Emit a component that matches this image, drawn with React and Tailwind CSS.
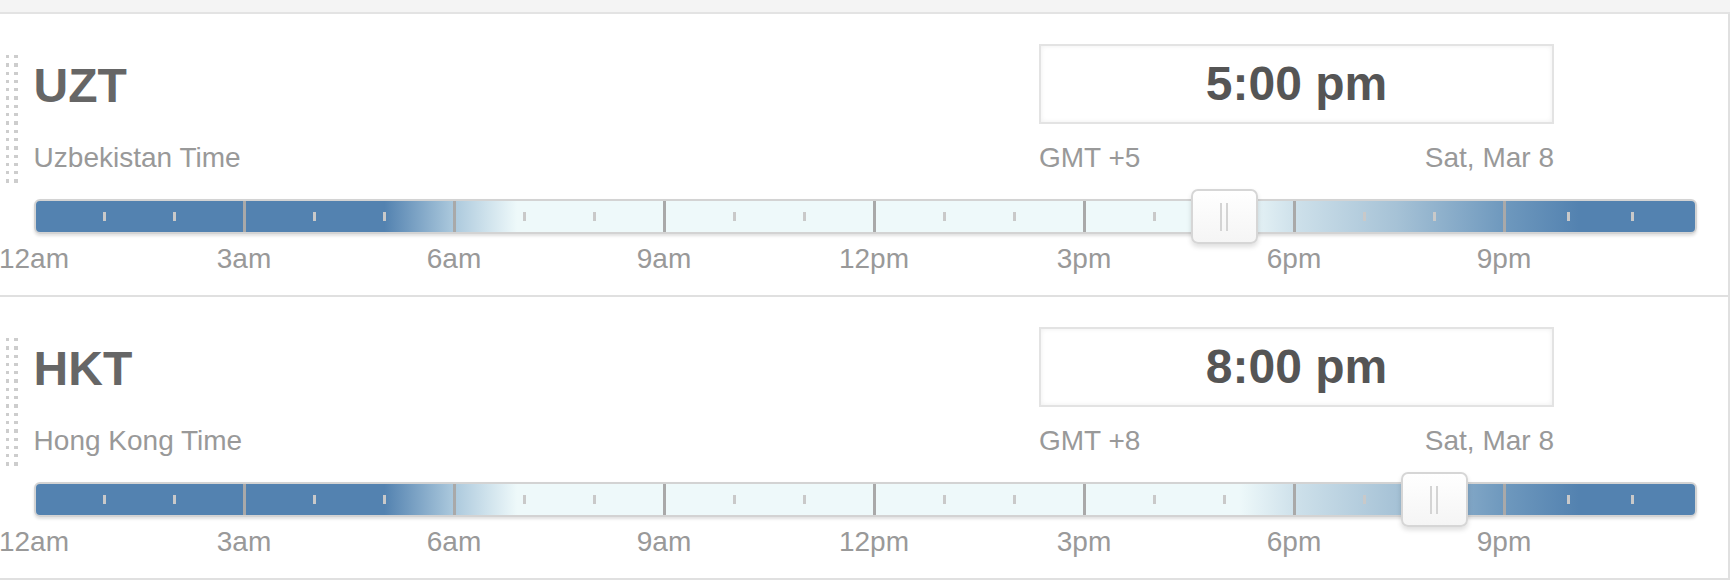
const zones = [
  {
    abbr: 'UZT',
    name: 'Uzbekistan Time',
    time: '5:00 pm',
    offset: 'GMT +5',
    date: 'Sat, Mar 8',
    hour: 17,
  },
  {
    abbr: 'HKT',
    name: 'Hong Kong Time',
    time: '8:00 pm',
    offset: 'GMT +8',
    date: 'Sat, Mar 8',
    hour: 20,
  },
];

const labels = ['12am', '3am', '6am', '9am', '12pm', '3pm', '6pm', '9pm'];

function DragHandle() {
  return (
    <div className="ml-[6px] mt-[41px] grid h-fit w-fit grid-cols-2 gap-x-[5px] gap-y-[5px]">
      {Array.from({ length: 32 }).map((_, i) => (
        <div key={i} className="h-[3.3px] w-[3.3px] bg-[#cdcdcd]" />
      ))}
    </div>
  );
}

function Ticks() {
  return (
    <>
      <div className="h-[9px] w-[3px] bg-[#c9c9c9]" />
      <div className="h-[9px] w-[3px] bg-[#c9c9c9]" />
    </>
  );
}

function DayBar({ hour }) {
  return (
    <div className="relative ml-[34px] h-[35px] w-[1663px] rounded-[6px] border-2 border-[#d3d3d3] bg-[linear-gradient(to_right,#5382b0_21%,#a8c6db_25%,#eef9fa_29%,#eef9fa_72.5%,#cde0ea_76%,#a6c2d6_82%,#6f99be_88.4%,#5382b0_93%)] shadow-[0_2px_3px_rgba(0,0,0,0.12)]">
      <div className="flex h-full overflow-hidden rounded-[4px]">
        <div className="flex h-full w-[207px] shrink-0 items-center justify-evenly">
          <Ticks />
        </div>
        {[1, 2, 3, 4, 5, 6].map((s) => (
          <div
            key={s}
            className="flex h-full w-[210px] shrink-0 items-center justify-evenly border-l-[3px] border-[#a9a9a9]"
          >
            <Ticks />
          </div>
        ))}
        <div className="flex h-full flex-1 items-center justify-evenly border-l-[3px] border-[#a9a9a9]">
          <Ticks />
        </div>
      </div>

      {/* slider thumb */}
      <div
        className="absolute top-[-12px] flex h-[55px] w-[67px] items-center justify-center gap-[4.5px] rounded-[7px] border-2 border-[#d6d6d6] bg-gradient-to-b from-white to-[#f5f5f5] shadow-[0_3px_5px_rgba(0,0,0,0.13)]"
        style={{ left: hour * 70 - 35.5 }}
      >
        <div className="h-[28px] w-[2px] bg-[#d4d4d4]" />
        <div className="h-[28px] w-[2px] bg-[#d4d4d4]" />
      </div>
    </div>
  );
}

function ZoneCard({ zone }) {
  return (
    <div className="h-[283px] border-b-2 border-[#e0e0e0]">
      <div className="flex h-[185px]">
        <DragHandle />
        <div className="ml-[16px] mt-[48px]">
          <div className="text-[48px] font-bold leading-[48px] text-[#666]">{zone.abbr}</div>
          <div className="mt-[35px] text-[28px] leading-[26px] text-[#999]">{zone.name}</div>
        </div>
        <div className="ml-auto mr-[174px] mt-[30px] w-[515px]">
          <div className="flex h-[80px] items-center justify-center border-2 border-[#e3e3e3] bg-white text-[48px] font-bold leading-none text-[#555] shadow-[inset_0_0_5px_rgba(0,0,0,0.07)]">
            {zone.time}
          </div>
          <div className="mt-[21px] flex justify-between text-[28px] leading-[26px] text-[#999]">
            <span>{zone.offset}</span>
            <span>{zone.date}</span>
          </div>
        </div>
      </div>

      <DayBar hour={zone.hour} />

      <div className="-ml-[71px] mt-[12px] flex text-[28px] leading-[26px] text-[#999]">
        {labels.map((l) => (
          <div key={l} className="w-[210px] shrink-0 text-center">
            {l}
          </div>
        ))}
      </div>
    </div>
  );
}

export default function App() {
  return (
    <div className="h-[580px] w-[1730px] overflow-hidden bg-white font-['Liberation_Sans',Arial,sans-serif]">
      <div className="h-[14px] border-b-2 border-[#e3e3e3] bg-[#f4f4f4]" />
      <div className="border-r-2 border-[#e0e0e0]">
        {zones.map((z) => (
          <ZoneCard key={z.abbr} zone={z} />
        ))}
      </div>
    </div>
  );
}
